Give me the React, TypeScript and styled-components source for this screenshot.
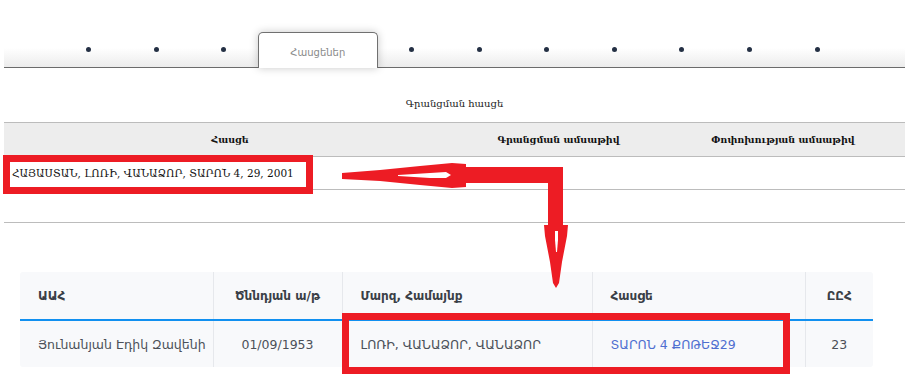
import React from "react";
import styled, { createGlobalStyle } from "styled-components";

const Global = createGlobalStyle`
  html, body { margin: 0; padding: 0; background: #fff; }
  body { font-family: "DejaVu Sans", sans-serif; }
  th, td { box-sizing: border-box; }
`;

const Page = styled.div`
  position: relative;
  width: 905px;
  height: 381px;
  overflow: hidden;
  padding-left: 4px;
  box-sizing: border-box;
`;

const TabBar = styled.ul`
  list-style: none;
  margin: 32px 0 0 0;
  padding: 0 0 0 51px;
  display: flex;
  align-items: stretch;
  height: 35px;
  border-bottom: 1px solid #6b6b6b;
  background: linear-gradient(to bottom, #fff 0%, #fff 45%, #ececec 100%);
`;

const Tab = styled.li<{ $active?: boolean }>`
  box-sizing: border-box;
  width: ${(p) => (p.$active ? "120px" : "67.6px")};
  display: flex;
  align-items: center;
  justify-content: center;
  position: relative;
  ${(p) =>
    p.$active
      ? `
    background: #fff;
    border: 1px solid #707070;
    border-bottom: none;
    border-radius: 5px 5px 0 0;
    margin-bottom: -1px;
    box-shadow: 0 0 9px rgba(0,0,0,0.22);
    z-index: 1;
    padding-top: 4px;
  `
      : ""}
`;

const Dot = styled.span`
  width: 5px;
  height: 5px;
  border-radius: 50%;
  background: #243044;
  margin-bottom: 1px;
`;

const TabLabel = styled.span`
  font-family: "DejaVu Sans", sans-serif;
  font-size: 10px;
  color: #8a8a8a;
`;

const Title = styled.div`
  font-family: "DejaVu Serif", serif;
  font-size: 10px;
  color: #222;
  text-align: center;
  padding: 30px 0 0 0;
  height: 24px;
`;

const RegTable = styled.table`
  width: 901px;
  border-collapse: collapse;
  font-family: "DejaVu Serif", serif;
  table-layout: fixed;
`;

const RegHead = styled.th<{ $w: number }>`
  width: ${(p) => p.$w}px;
  background: #ededed;
  border-top: 1px solid #bcbcbc;
  border-bottom: 1px solid #bcbcbc;
  height: 34px;
  padding: 0;
  font-size: 9.5px;
  font-weight: bold;
  color: #111;
  text-align: center;
`;

const RegCell = styled.td`
  height: 33px;
  padding: 0 0 0 8px;
  border-bottom: 1px solid #bcbcbc;
  font-size: 10.5px;
  color: #111;
  white-space: nowrap;
`;

const Card = styled.div`
  margin: 49px 0 0 16px;
  width: 853px;
  background: #f8f9fb;
  border-radius: 3px;
`;

const ListTable = styled.table`
  width: 853px;
  border-collapse: collapse;
  table-layout: fixed;
  font-family: "DejaVu Sans", sans-serif;
`;

const ListHead = styled.th<{ $w: number; $center?: boolean }>`
  width: ${(p) => p.$w}px;
  height: 48px;
  padding: 0 0 0 ${(p) => (p.$center ? 0 : 18)}px;
  text-align: ${(p) => (p.$center ? "center" : "left")};
  font-size: 12px;
  font-weight: 600;
  color: #3a3f47;
  border-bottom: 2px solid #1190f0;
  border-right: 1px solid #e6e8ec;
  &:last-child { border-right: none; }
`;

const ListCell = styled.td<{ $center?: boolean; $link?: boolean }>`
  height: 47px;
  padding: 0 0 0 ${(p) => (p.$center ? 0 : 18)}px;
  text-align: ${(p) => (p.$center ? "center" : "left")};
  font-size: 12.5px;
  color: ${(p) => (p.$link ? "#4f6fd0" : "#4b5058")};
  border-right: 1px solid #e6e8ec;
  white-space: nowrap;
  &:last-child { border-right: none; }
`;

const Highlight = styled.div<{ $x: number; $y: number; $w: number; $h: number }>`
  position: absolute;
  left: ${(p) => p.$x}px;
  top: ${(p) => p.$y}px;
  width: ${(p) => p.$w}px;
  height: ${(p) => p.$h}px;
  border: 7px solid #ed1c24;
  box-sizing: border-box;
  pointer-events: none;
`;

const Arrow = styled.svg`
  position: absolute;
  left: 0;
  top: 0;
  pointer-events: none;
`;

const tabs = [0, 1, 2, "active", 4, 5, 6, 7, 8, 9, 10];

export default function App() {
  return (
    <>
      <Global />
      <Page>
        <TabBar>
          {tabs.map((t, i) =>
            t === "active" ? (
              <Tab key={i} $active>
                <TabLabel>Հասցեներ</TabLabel>
              </Tab>
            ) : (
              <Tab key={i}>
                <Dot />
              </Tab>
            )
          )}
        </TabBar>
        <Title>Գրանցման հասցե</Title>
        <RegTable>
          <thead>
            <tr>
              <RegHead $w={452}>Հասցե</RegHead>
              <RegHead $w={205}>Գրանցման ամսաթիվ</RegHead>
              <RegHead $w={244}>Փոփոխության ամսաթիվ</RegHead>
            </tr>
          </thead>
          <tbody>
            <tr>
              <RegCell>ՀԱՅԱՍՏԱՆ, ԼՈՌԻ, ՎԱՆԱՁՈՐ, ՏԱՐՈՆ 4, 29, 2001</RegCell>
              <RegCell />
              <RegCell />
            </tr>
            <tr>
              <RegCell />
              <RegCell />
              <RegCell />
            </tr>
          </tbody>
        </RegTable>
        <Card>
          <ListTable>
            <thead>
              <tr>
                <ListHead $w={193}>ԱԱՀ</ListHead>
                <ListHead $w={129} $center>Ծննդյան ա/թ</ListHead>
                <ListHead $w={250}>Մարզ, Համայնք</ListHead>
                <ListHead $w={213}>Հասցե</ListHead>
                <ListHead $w={68} $center>ԸԸՀ</ListHead>
              </tr>
            </thead>
            <tbody>
              <tr>
                <ListCell>Յունանյան Էդիկ Զավենի</ListCell>
                <ListCell $center>01/09/1953</ListCell>
                <ListCell>ԼՈՌԻ, ՎԱՆԱՁՈՐ, ՎԱՆԱՁՈՐ</ListCell>
                <ListCell $link>ՏԱՐՈՆ 4 ՔՈԹԵՋ29</ListCell>
                <ListCell $center>23</ListCell>
              </tr>
            </tbody>
          </ListTable>
        </Card>

        <Highlight $x={3} $y={155} $w={310} $h={39} />
        <Highlight $x={342} $y={313} $w={448} $h={61} />
        <Arrow width="905" height="381" viewBox="0 0 905 381">
          <g fill="#ed1c24">
            <polygon points="342,173 380,170 420,166 452,163 466,164 466,187 452,188 420,185 380,181 342,179" />
            <rect x="455" y="167" width="108" height="16" />
            <rect x="548" y="167" width="15" height="60" />
            <polygon points="544,225 568,225 567,236 562,262 559,283 556,288 553,283 550,262 545,236" />
          </g>
          <g fill="#fff">
            <polygon points="398,175 430,173 446,172 451,175 446,178 430,178 398,176" />
            <polygon points="555,231 558,231 558,240 557,252 556,252 555,240" />
          </g>
        </Arrow>
      </Page>
    </>
  );
}
